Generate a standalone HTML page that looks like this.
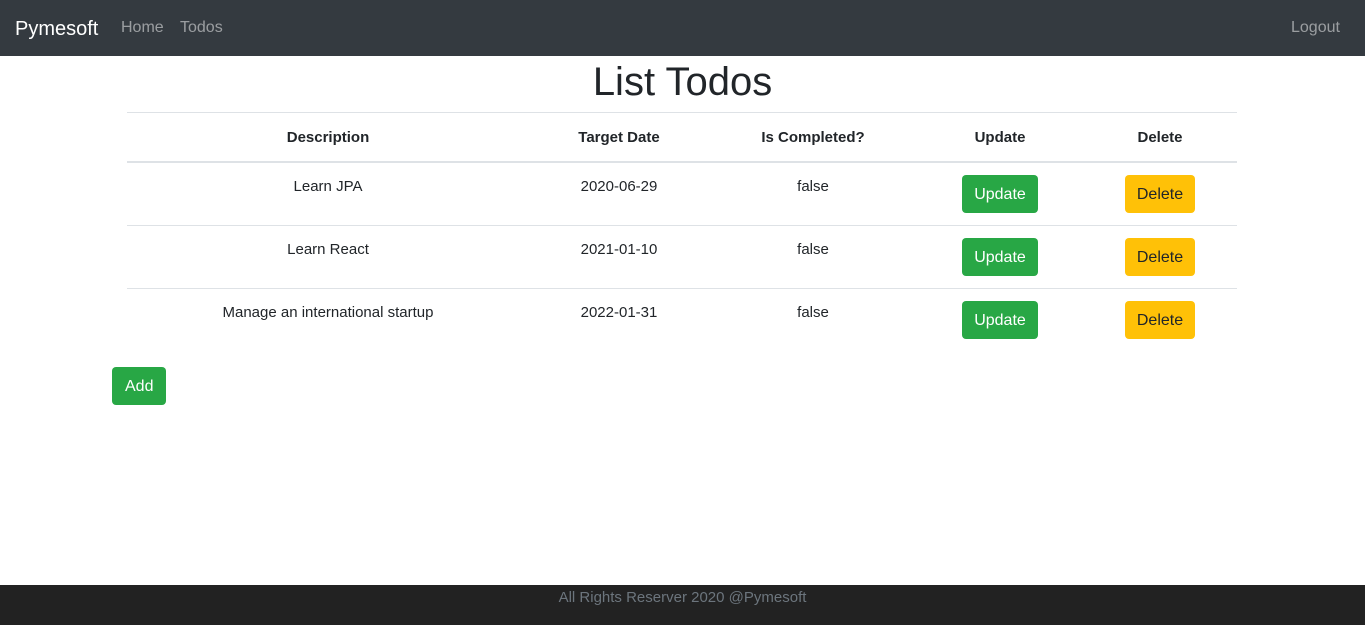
<!DOCTYPE html>
<html><head><meta charset="utf-8"><style>
*{box-sizing:border-box;margin:0;padding:0}
body{width:1365px;height:625px;position:relative;font-family:"Liberation Sans",Arial,sans-serif;color:#212529;font-size:16px;background:#fff;overflow:hidden}
nav{height:56px;background:#343a40;position:relative}
.brand{position:absolute;left:15px;top:15px;font-size:20px;color:#fff;line-height:28px}
.nl{position:absolute;top:16px;color:rgba(255,255,255,.5);line-height:24px}
h1{position:absolute;left:0;width:1365px;text-align:center;top:58px;font-size:40px;font-weight:500;line-height:48px}
table{position:absolute;left:127px;top:112px;width:1110px;border-collapse:collapse;table-layout:fixed}
th,td{text-align:center;vertical-align:top;padding:12px;line-height:24px;border-top:1px solid #dee2e6}
th{font-weight:bold;border-bottom:2px solid #dee2e6;height:48px;font-size:15px;padding-top:13px;padding-bottom:11px}
td{height:63px;font-size:15px}
.btn{display:inline-block;color:#fff;background:#28a745;border-radius:4px;padding:7px 12px 5px;line-height:26px;font-size:16px}
.y{background:#ffc107;color:#212529}
.add{position:absolute;left:112px;top:367px;padding:7px 13px 5px}
footer{position:absolute;left:0;top:585px;width:1365px;height:40px;background:#222;color:#6c757d;text-align:center;font-size:15px;line-height:24px;padding-top:1px}
</style></head><body>
<nav><span class="brand">Pymesoft</span><span class="nl" style="left:121px">Home</span><span class="nl" style="left:180px">Todos</span><span class="nl" style="left:1291px">Logout</span></nav>
<h1>List Todos</h1>
<table>
<colgroup><col style="width:402px"><col style="width:180px"><col style="width:208px"><col style="width:166px"><col style="width:154px"></colgroup>
<tr><th>Description</th><th>Target Date</th><th>Is Completed?</th><th>Update</th><th>Delete</th></tr>
<tr><td>Learn JPA</td><td>2020-06-29</td><td>false</td><td><span class="btn">Update</span></td><td><span class="btn y">Delete</span></td></tr>
<tr><td>Learn React</td><td>2021-01-10</td><td>false</td><td><span class="btn">Update</span></td><td><span class="btn y">Delete</span></td></tr>
<tr><td>Manage an international startup</td><td>2022-01-31</td><td>false</td><td><span class="btn">Update</span></td><td><span class="btn y">Delete</span></td></tr>
</table>
<span class="btn add">Add</span>
<footer>All Rights Reserver 2020 @Pymesoft</footer>
</body></html>
